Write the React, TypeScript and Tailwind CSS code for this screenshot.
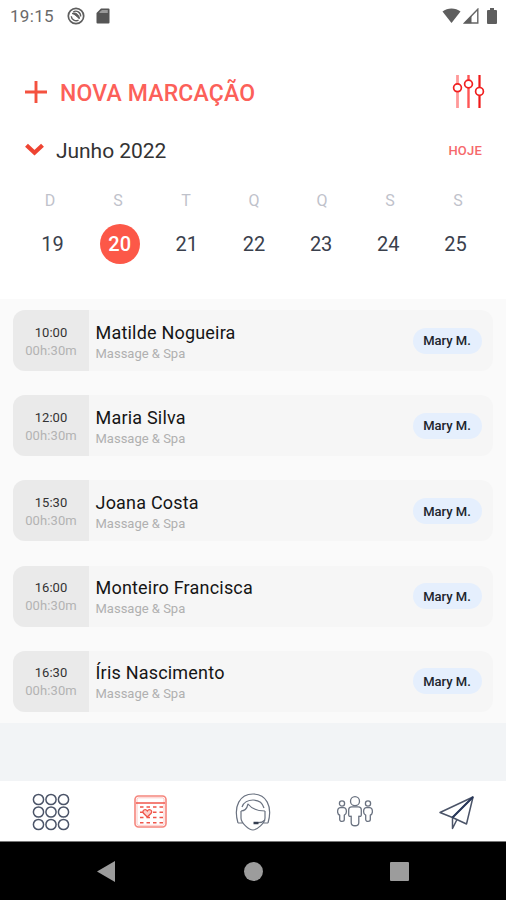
import React from "react";

const weekdays = ["D", "S", "T", "Q", "Q", "S", "S"];
const days = [19, 20, 21, 22, 23, 24, 25];
const selectedDay = 20;

const appointments = [
  { time: "10:00", name: "Matilde Nogueira" },
  { time: "12:00", name: "Maria Silva" },
  { time: "15:30", name: "Joana Costa" },
  { time: "16:00", name: "Monteiro Francisca" },
  { time: "16:30", name: "Íris Nascimento" },
];

function StatusBar() {
  return (
    <div className="flex h-8 items-center pl-[10px] pr-[9px] text-[#6a6a6a]">
      <span className="w-[57px] text-[17px] leading-8 tracking-[0.3px]">19:15</span>
      <svg className="h-[18px] w-[18px]" viewBox="0 0 18 18" fill="none" stroke="#5e5e5e">
        <circle cx="9" cy="9" r="7.7" strokeWidth="1.7" />
        <path d="M4.300 9.200a4.800 4.800 0 0 0 7.200 3.900M6.200 5a4.800 4.800 0 0 1 7.400 4.500" strokeWidth="1.400" />
        <path d="M5 6.500C8 5 12 7 12.500 11.500C10.500 11.500 10 8 5 6.500Z" fill="#5e5e5e" strokeWidth="1" />
      </svg>
      <svg className="ml-[11px] h-4 w-[14px]" viewBox="0 0 14 16">
        <path d="M5 .5h7.500q1 0 1 1v13q0 1-1 1h-11q-1 0-1-1V5Z" fill="#555" />
        <path d="M3.500 5V4L6 1.900h5.800V5Z" fill="#999" />
      </svg>
      <svg className="ml-auto h-4 w-[19px]" viewBox="0 0 19 16">
        <path d="M.5 3.600C5.500-.5 13.500-.5 18.500 3.600L9.500 15Z" fill="#5e5e5e" />
      </svg>
      <svg className="ml-[2px] h-4 w-4" viewBox="0 0 16 16">
        <path d="M1.500 15 14.800 1.200V15Z" fill="none" stroke="#666" strokeWidth="1.400" />
        <path d="M1 15.300 8.500 7.500v7.800Z" fill="#5e5e5e" />
      </svg>
      <svg className="ml-2 h-4 w-[10px]" viewBox="0 0 10 16">
        <path d="M3 0h4v2h2q1 0 1 1v12q0 1-1 1H1q-1 0-1-1V3q0-1 1-1h2Z" fill="#5e5e5e" />
      </svg>
    </div>
  );
}

function Header() {
  return (
    <header className="flex h-[299px] flex-col bg-white">
      <StatusBar />
      <div className="mt-[42px] flex h-9 items-center pl-[25px] pr-[20px]">
        <svg className="h-[22px] w-[22px]" viewBox="0 0 22 22" stroke="#f4513f" strokeWidth="2.900">
          <path d="M11 0v22M0 11h22" />
        </svg>
        <span className="ml-[13px] mt-[3px] text-[23px] font-medium leading-9 tracking-[0.18px] text-[#fc6059]">NOVA MARCAÇÃO</span>
        <svg className="ml-auto h-[34px] w-[34px]" viewBox="0 0 34 34" fill="white">
          <path d="M5.500 0v33" stroke="#f99" strokeWidth="2.800" />
          <path d="M16.500 0v33" stroke="#f55" strokeWidth="2.400" />
          <path d="M27.500 0v33" stroke="#f01818" strokeWidth="2.200" />
          <g stroke="#f02020" strokeWidth="1.700">
            <circle cx="5.500" cy="12.800" r="3.900" />
            <circle cx="16.500" cy="9" r="3.900" />
            <circle cx="27.500" cy="16.400" r="3.900" />
          </g>
        </svg>
      </div>
      <div className="mt-[25px] flex h-8 items-center pl-[25px] pr-[24px]">
        <svg className="mb-[3px] h-[13px] w-[19px]" viewBox="0 0 19 13" fill="none" stroke="#ee4432" strokeWidth="4.200">
          <path d="m1.500 2.200 8 7.500 8-7.500" />
        </svg>
        <span className="ml-3 text-[21px] leading-8 tracking-[-0.05px] text-[#333]">Junho 2022</span>
        <span className="ml-auto text-[13px] font-medium tracking-[0.2px] text-[#f6696b]">HOJE</span>
      </div>
      <div className="mt-[22px] grid w-[492px] grid-cols-7 pl-[16px] text-center text-[16px] leading-6 text-[#bfc2cb]">
        {weekdays.map((day, i) => (
          <span key={i}>{day}</span>
        ))}
      </div>
      <div className="mt-[11px] grid w-[489px] grid-cols-7 pl-[19px] text-[20px] text-[#3a404c]">
        {days.map((day) => (
          <span
            key={day}
            className={
              day === selectedDay
                ? "mx-auto flex h-10 w-10 items-center justify-center rounded-full bg-[#fc5848] font-medium text-white"
                : "mx-auto flex h-10 w-10 items-center justify-center"
            }
          >
            {day}
          </span>
        ))}
      </div>
    </header>
  );
}

function AppointmentRow({ time, name }: { time: string; name: string }) {
  return (
    <div className="flex h-[61px] overflow-hidden rounded-xl bg-[#f6f6f6]">
      <div className="flex w-[76px] flex-col items-center bg-[#eaeaea] pt-[13.500px] leading-[18px]">
        <span className="text-[13px] text-[#333]">{time}</span>
        <span className="text-[13px] tracking-[0.1px] text-[#b3b3b3]">00h:30m</span>
      </div>
      <div className="flex flex-col pl-[6.500px] pt-[11.500px]">
        <span className="text-[18px] leading-[22px] tracking-[0.2px] text-[#151515]">{name}</span>
        <span className="text-[13px] leading-5 text-[#b0b0b0]">Massage &amp; Spa</span>
      </div>
      <span className="ml-auto mr-[11px] mt-[17.500px] flex h-[26px] w-[69px] items-center justify-center rounded-full bg-[#e5effd] pr-px pt-px text-[13px] font-medium text-[#20242c]">
        Mary M.
      </span>
    </div>
  );
}

function GridIcon() {
  return (
    <svg className="h-[38px] w-[38px]" viewBox="0 0 38 38" fill="none" stroke="#4b5468" strokeWidth="1.500">
      {[6.500, 19, 31.500].map((cy) => [6.500, 19, 31.500].map((cx) => <circle key={`${cx}-${cy}`} cx={cx} cy={cy} r="5.100" />))}
    </svg>
  );
}

function CalendarIcon() {
  return (
    <svg className="h-[33px] w-[33px]" viewBox="0 0 33 33" fill="none" stroke="#f0564b">
      <rect x="1" y="1" width="31" height="31" rx="3.500" strokeWidth="1.600" stroke="#f5857c" />
      <rect x="3" y="2.800" width="27" height="27.500" rx="1.500" strokeWidth=".6" stroke="#f9a59f" />
      <path d="M2 8h29" strokeWidth="1.500" />
      <path d="M6 12h23M6 17.200h23M6 22.500h23M6 27.700h23" strokeDasharray="3.500 3" strokeWidth="1.400" />
      <path d="M13.300 22 9.500 18.300c-2-3 2-5 3.800-2.300 1.800-2.700 5.800-.7 3.800 2.300Z" fill="#fbd0cc" strokeWidth="1.300" />
    </svg>
  );
}

function SupportIcon() {
  return (
    <svg className="h-[38px] w-9" viewBox="0 0 36 38" fill="none" stroke="#6a7280" strokeWidth="1.200" strokeLinejoin="round">
      <path d="M3 30C-2 13 5 1 18 1s20 12 15 29" />
      <path d="M7 14C10 5 26 4 29 15" />
      <path d="M3 30h4.500M33 30h-4.500M6 18v7c0 5 8 12 12 12s12-7 12-12v-7" />
      <path d="M6 18c4 0 6-2.500 7-7 3 4 8 7 17 7" />
      <path d="M30 27c-2 2-4 2.700-7 2.700" />
      <path d="M18.500 30h5" stroke="#343e50" strokeWidth="2.500" />
    </svg>
  );
}

function PeopleIcon() {
  return (
    <svg className="h-[31px] w-[36px]" viewBox="0 0 36 31" fill="none" stroke="#6a7280" strokeWidth="1.300" strokeLinejoin="round">
      <circle cx="18" cy="5.200" r="4.500" />
      <path d="M14.700 10.800h6.600c2 0 3 1.200 3 3v5.200c0 1.300-1.500 1.700-2.500 1.200v6.300c0 4.300-7.600 4.300-7.600 0v-6.300c-1 .5-2.500.1-2.500-1.200v-5.200c0-1.800 1-3 3-3Z" />
      <circle cx="5" cy="7.500" r="2.600" />
      <path d="M3.500 11.700h3c1.800 0 2.900 2 2.900 4s-.9 3-2.100 3.500v4.300c0 2.500-4.600 2.500-4.600 0v-4.300C1.500 18.700.6 17.700.6 15.700s1.100-4 2.900-4Z" />
      <circle cx="31" cy="7.500" r="2.600" />
      <path d="M29.500 11.700h3c1.800 0 2.900 2 2.900 4s-.9 3-2.100 3.500v4.300c0 2.500-4.600 2.500-4.600 0v-4.300c-1.200-.5-2.100-1.500-2.100-3.500s1.100-4 2.900-4Z" />
    </svg>
  );
}

function PlaneIcon() {
  return (
    <svg className="h-[34px] w-[35px]" viewBox="0 0 35 34" fill="none" stroke="#4b5468" strokeWidth="1.500" strokeLinejoin="round">
      <path d="M34 1 1 16.500l12.500 5L27.500 28Z" />
      <path d="M34 1 13.500 21.500v11L18 23.500" />
      <path d="M34 1 13.500 21.500" stroke="#28375a" strokeWidth="1.900" />
    </svg>
  );
}

export default function App() {
  return (
    <div className="flex h-[900px] w-[506px] flex-col overflow-hidden bg-[#f2f4f6] font-[Roboto,sans-serif]">
      <Header />
      <main className="flex h-[424px] flex-col gap-[24.200px] bg-[#fafafa] px-[13px] pt-[11px]">
        {appointments.map((item) => (
          <AppointmentRow key={item.time} time={item.time} name={item.name} />
        ))}
      </main>
      <nav className="mt-[58px] flex h-[61px] items-center border-b border-[#777] bg-white pl-8 pt-px">
        <GridIcon />
        <span className="ml-16"><CalendarIcon /></span>
        <span className="ml-[68px]"><SupportIcon /></span>
        <span className="ml-[66px]"><PeopleIcon /></span>
        <span className="ml-[66px] pt-[2px]"><PlaneIcon /></span>
      </nav>
      <div className="flex flex-1 items-center bg-black pl-[97px]">
        <svg className="h-[21px] w-[18px]" viewBox="0 0 18 21"><path d="M0 10.500 18 0v21Z" fill="#9c9c9c" /></svg>
        <span className="ml-[129px] h-[19px] w-[19px] rounded-full bg-[#9c9c9c]" />
        <span className="ml-[127px] h-[19px] w-[19px] rounded-[1px] bg-[#9c9c9c]" />
      </div>
    </div>
  );
}
